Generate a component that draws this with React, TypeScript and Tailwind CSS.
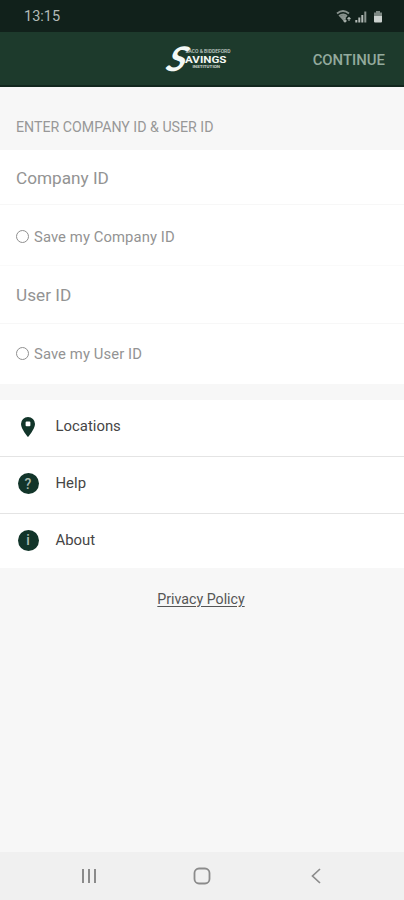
import React from 'react';

interface FieldGroupProps {
  label: string;
  className: string;
  saveClassName: string;
}

interface MenuItem {
  label: string;
  icon: React.ReactNode;
}

const PinIcon = () => (
  <svg width="14" height="20" viewBox="0 0 14 20" fill="#12352a">
    <path fillRule="evenodd" d="M7 0a7 7 0 0 0-7 7c0 5 7 13 7 13s7-8 7-13a7 7 0 0 0-7-7ZM5.600 4.500h2.800q1 0 1 1v2.800q0 1-1 1H5.600q-1 0-1-1V5.500q0-1 1-1Z" />
  </svg>
);

const BadgeIcon = ({ symbol }: { symbol: string }) => (
  <span className="flex h-[21px] w-[21px] items-center justify-center rounded-full bg-[#12352a] text-[14px] font-medium leading-none text-[#a9bbb1]">
    {symbol}
  </span>
);

const menuItems: MenuItem[] = [
  { label: 'Locations', icon: <PinIcon /> },
  { label: 'Help', icon: <BadgeIcon symbol="?" /> },
  { label: 'About', icon: <BadgeIcon symbol="i" /> },
];

const Logo = () => (
  <svg width="68" height="32" viewBox="0 0 68 32" fill="#f4f8f5" fontFamily="Roboto, sans-serif" overflow="visible">
    {/* Slanted initial, the three lines of the name sit to its right */}
    <text fontSize="34" fontWeight="700" fontFamily="Lato, sans-serif" transform="translate(-1.5 28) skewX(-24) scale(1 1)">S</text>
    <text x="20.500" y="10" fontSize="4.800" fontWeight="500" textLength="45" lengthAdjust="spacingAndGlyphs" opacity="0.75">SACO &amp; BIDDEFORD</text>
    <text x="20" y="19.600" fontSize="9.500" fontWeight="700" textLength="41.500" lengthAdjust="spacingAndGlyphs">AVINGS</text>
    <text x="27.500" y="24.600" fontSize="4.200" fontWeight="700" textLength="27.500" lengthAdjust="spacingAndGlyphs" opacity="0.8">INSTITUTION</text>
  </svg>
);

const StatusBar = () => (
  <div className="flex h-8 items-center justify-between bg-[#11211b] pl-6 pr-[21px]">
    <span className="pt-0.5 text-[14.5px] text-[#b4bbb7]">13:15</span>
    <svg width="47" height="15" viewBox="0 0 47 15" fill="none">
      {/* Wi-Fi */}
      <path d="M1 4.500C5 1.200 9 1.200 13 4.500M3 7c3-2.200 5.500-2.200 8 0" stroke="#87918c" strokeWidth="1.800" />
      <path d="M3.500 7.500 7.500 12l3.500-5C8.500 5.600 6 5.600 3.500 7.500Z" fill="#87918c" />
      <path d="M9 9v4M7.500 11.500 9 13l1.500-1.500M13 12V8.500M11.500 10 13 8.500l1.500 1.500" stroke="#a9b2ad" strokeWidth="1.100" />
      {/* Mobile signal */}
      <path d="M20.300 13.500v-2.500M23.300 13.500V8.500M26.300 13.500V6" stroke="#b4bbb7" strokeWidth="2" />
      <path d="M29.300 13.500V2.500" stroke="#8a948f" strokeWidth="2" />
      {/* Battery */}
      <path d="M40 2h4v1.500h2V7h-8V3.500h2Z" fill="#7d8883" />
      <path d="M38 7h8v5.500q0 1-1 1h-6q-1 0-1-1Z" fill="#cbd1ce" />
    </svg>
  </div>
);

const FieldGroup: React.FC<FieldGroupProps> = ({ label, className, saveClassName }) => (
  <div className={className}>
    <div className="flex flex-1 items-center border-b border-[#f7f7f7] px-4 pt-[3px] text-[17.2px] text-[#939393]">
      {label}
    </div>
    <label className={`flex h-[60px] items-center gap-[5px] px-4 text-[14.8px] tracking-[0.1px] text-[#939393] ${saveClassName}`}>
      <span className="mb-0.5 h-[13px] w-[13px] rounded-full border-[1.5px] border-[#8f8f8f]" />
      Save my {label}
    </label>
  </div>
);

const NavBar = () => (
  <div className="flex h-12 items-center justify-between bg-[#f0f0f0] pl-[81px] pr-[83px] text-[#8b8b8b]">
    <svg width="16" height="16" viewBox="0 0 16 16" fill="none" stroke="currentColor" strokeWidth="2">
      <path d="M2 1v14M8 1v14M14 1v14" />
    </svg>
    <svg className="-ml-1" width="18" height="18" viewBox="0 0 18 18" fill="none" stroke="currentColor" strokeWidth="1.800">
      <rect x="1.500" y="1.500" width="15" height="15" rx="4.500" />
    </svg>
    <svg width="10" height="16" viewBox="0 0 10 16" fill="none" stroke="currentColor" strokeWidth="1.700">
      <path d="M9 1 1.500 8 9 15" />
    </svg>
  </div>
);

export default function App() {
  return (
    <div className="flex h-[900px] w-[404px] flex-col overflow-hidden bg-[#f7f7f7] font-['Roboto',sans-serif]">
      <StatusBar />

      {/* App bar */}
      <header className="grid h-[55px] grid-cols-[1fr_68px_1fr] items-center border-b-2 border-[#12271e] bg-[#1d3a2c]">
        <span />
        <div className="-translate-x-[3px]">
          <Logo />
        </div>
        <button className="justify-self-end pr-[19px] pt-[3px] text-[14.9px] font-medium text-[#93aa9d]">CONTINUE</button>
      </header>

      <h2 className="flex h-[63px] items-end px-4 pb-3 text-[14.2px] text-[#989898]">
        ENTER COMPANY ID &amp; USER ID
      </h2>

      {/* Login fields */}
      <div className="bg-white">
        <FieldGroup label="Company ID" className="flex h-[116px] flex-col border-b border-[#fafafa]" saveClassName="pt-[5px]" />
        <FieldGroup label="User ID" className="flex h-[118px] flex-col" saveClassName="" />
      </div>

      {/* Links */}
      <nav className="mt-4 divide-y divide-[#e4e4e4] bg-white">
        {menuItems.map((item) => (
          <a key={item.label} className="flex h-[57px] items-center pb-[3px] pl-[17.500px] last:h-[54px] last:pb-0.5">
            <span className="flex w-[21px] justify-center">{item.icon}</span>
            <span className="ml-[17px] text-[14.9px] text-[#454545]">{item.label}</span>
          </a>
        ))}
      </nav>

      <div className="flex flex-1 justify-center pt-[21px]">
        <a className="mr-0.5 text-[14.2px] text-[#555] underline underline-offset-2">Privacy Policy</a>
      </div>

      <NavBar />
    </div>
  );
}
